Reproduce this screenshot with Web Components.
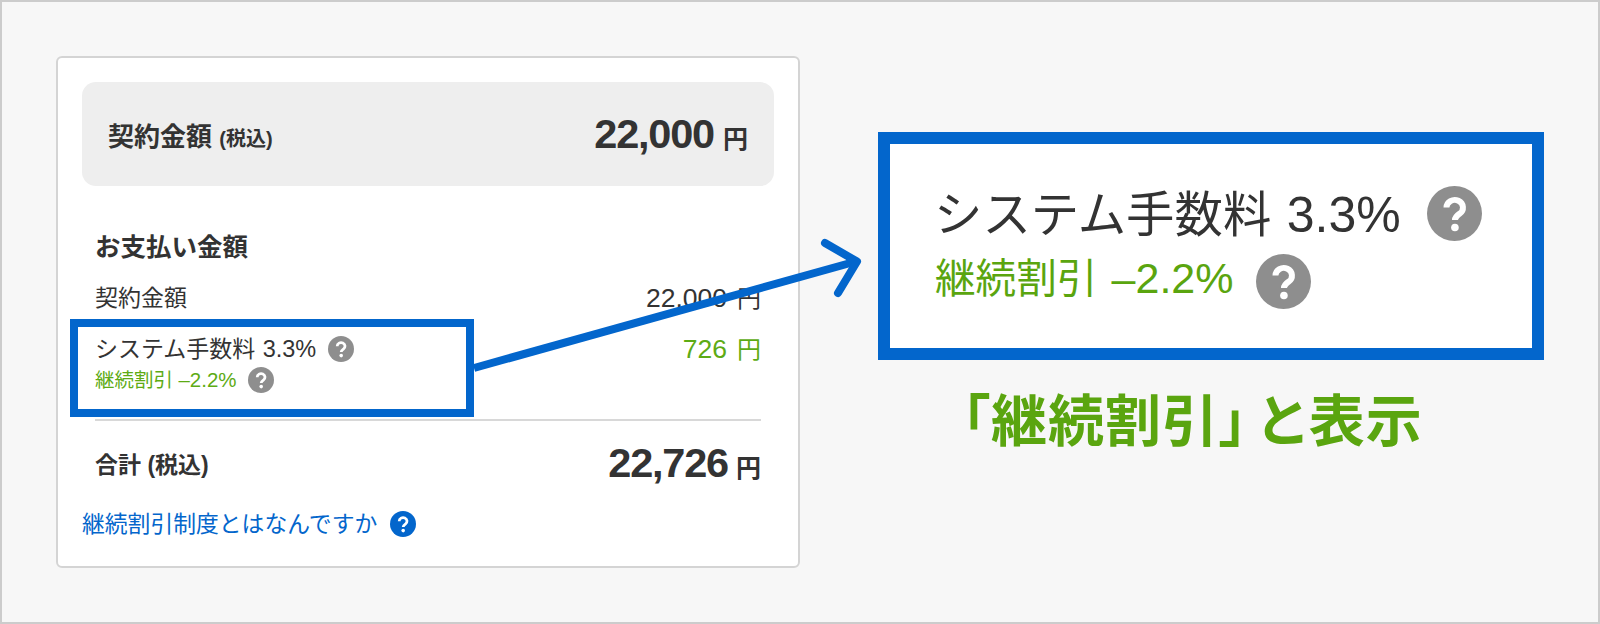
<!DOCTYPE html>
<html lang="ja"><head><meta charset="utf-8">
<style>html,body{margin:0;padding:0}body{font-family:"Liberation Sans","Noto Sans CJK JP",sans-serif;color:#333}</style>
</head><body>
<template id="q-t"><style>
:host{display:inline-flex;flex:none;vertical-align:middle;width:var(--s,26px);height:var(--s,26px)}
svg{width:100%;height:100%;display:block}
</style><svg viewBox="0 0 26 26"><circle cx="13" cy="13" r="13" fill="var(--c,#8e8e8e)"/><path d="M9.2 10.2a3.9 3.6 0 1 1 6.2 2.9c-1.3.9-2.2 1.500-2.200 3" fill="none" stroke="#fff" stroke-width="2.800"/><circle cx="13.200" cy="19.600" r="1.800" fill="#fff"/></svg></template>

<template id="row-t"><style>
:host{display:flex;justify-content:space-between;align-items:flex-start;font-size:23px;line-height:32px}
</style><div><slot name="l"></slot></div><div><slot name="r"></slot></div></template>

<template id="card-t"><style>
:host{display:block;box-sizing:border-box;width:744px;height:512px;background:#fff;border:2px solid #d4d4d4;border-radius:6px;padding:24px 24px 0;flex:none}
</style><slot></slot></template>

<template id="hero-t"><style>
:host{display:flex;justify-content:space-between;align-items:center;box-sizing:border-box;height:104px;background:#eee;border-radius:14px;padding:0 26px;font-weight:700}
.l{font-size:26px}.l small{font-size:20px}
.r{font-size:41.500px;letter-spacing:-1.200px}.r small{font-size:25px;letter-spacing:0;margin-left:9px}
</style><div class="l">契約金額 <small>(税込)</small></div><div class="r">22,000<small>円</small></div></template>

<template id="pay-t"><style>
:host{display:block;padding:0 13px}
h2{margin:43px 0 0;font-size:25.500px;line-height:36px;font-weight:700}
.rows{margin-top:17px;display:flex;flex-direction:column;gap:18px}
.g{color:#5dab14}
.num{font-size:26.500px}.yen{font-size:24px;margin-left:10px}
.sys{font-size:23px;line-height:32px;display:flex;align-items:center;gap:12px}
.sys b{font-weight:400;font-size:23.500px;margin-left:1px}
.disc{font-size:19.500px;line-height:28px;color:#5dab14;display:flex;align-items:center;gap:11px;margin-top:1px}
.disc b{font-weight:400;font-size:20.500px}
hr{border:0;border-top:2px solid #d8d8d8;margin:25px 0 0}
.tot{display:flex;justify-content:space-between;align-items:center;margin-top:17px;height:50px;font-weight:700;font-size:23px}
.big{font-size:41.500px;letter-spacing:-1.200px}.big small{font-size:25px;letter-spacing:0;margin-left:8px}
</style>
<h2>お支払い金額</h2>
<div class="rows">
<x-row><span slot="l">契約金額</span><span slot="r"><span class="num">22,000</span><span class="yen">円</span></span></x-row>
<x-row><div slot="l"><div class="sys"><span>システム手数料 <b>3.3%</b></span><x-q></x-q></div><div class="disc"><span>継続割引 <b>–2.2%</b></span><x-q></x-q></div></div><span slot="r" class="g"><span class="num">726</span><span class="yen">円</span></span></x-row>
</div>
<hr>
<div class="tot"><span>合計 (税込)</span><span class="big">22,726<small>円</small></span></div>
</template>

<template id="link-t"><style>
:host{display:flex;align-items:center;gap:13px;color:#0366cc;font-size:22.800px;line-height:32px;margin-top:20px;--c:#0366cc}
</style><slot></slot><x-q></x-q></template>

<template id="callout-t"><style>
:host{display:flex;flex-direction:column;box-sizing:border-box;justify-content:flex-start;width:666px;height:228px;border:12px solid #0366cc;background:#fff;padding:37px 0 0 44px;color:#333}
.a,.b{display:flex;align-items:center;--s:55px}
.a{font-size:48.400px;line-height:60px;gap:26px}
.a b{font-weight:400;font-size:50px;margin-left:2px}
.b{font-size:40.600px;line-height:60px;color:#5aa50f;gap:22px;margin-top:3px}
.b b{font-weight:400;font-size:43px;margin-left:3px}
.a .t{padding-top:4px}
.b .t{padding:0 0 6px 1px}
</style><div class="a"><span class="t">システム手数料 <b>3.3%</b></span><x-q></x-q></div><div class="b"><span class="t">継続割引 <b>–2.2%</b></span><x-q></x-q></div></template>

<template id="stage-t"><style>
:host{display:flex;box-sizing:border-box;width:1600px;height:624px;background:#f7f7f7;border:2px solid #ccc;padding:54px 0 0 54px;position:relative;gap:78px}
.right{display:flex;flex-direction:column;padding-top:76px;align-items:flex-start;width:666px}
.cap{font-size:56px;font-weight:700;color:#5aa50f;line-height:80px;margin:22px 0 0 84px;font-feature-settings:"palt";letter-spacing:1px;white-space:nowrap}
.cap span{margin-right:10px}
.cap i{font-style:normal;margin-left:3px}
.box{position:absolute;left:68px;top:317px;width:404px;height:98px;box-sizing:border-box;border:8px solid #0366cc}
svg{position:absolute;left:0;top:0;width:1596px;height:620px;overflow:visible}
</style>
<x-card><x-hero></x-hero><x-pay></x-pay><x-link>継続割引制度とはなんですか</x-link></x-card>
<div class="right"><x-callout></x-callout><div class="cap"><span>「継続割引」</span>と<i>表示</i></div></div>
<div class="box"></div>
<svg viewBox="0 0 1596 620"><path d="M472 366 852 260" stroke="#0366cc" stroke-width="8" fill="none"/><path d="M823 241 855 259.500 836 291" stroke="#0366cc" stroke-width="8" fill="none" stroke-linecap="round" stroke-linejoin="round"/></svg>
</template>

<x-stage></x-stage>
<script>
for (const [n,t] of [['x-q','q-t'],['x-row','row-t'],['x-card','card-t'],['x-hero','hero-t'],['x-pay','pay-t'],['x-link','link-t'],['x-callout','callout-t'],['x-stage','stage-t']]) {
  customElements.define(n, class extends HTMLElement {
    constructor(){super();this.attachShadow({mode:'open'}).appendChild(document.getElementById(t).content.cloneNode(true));}
  });
}
</script>
</body></html>
